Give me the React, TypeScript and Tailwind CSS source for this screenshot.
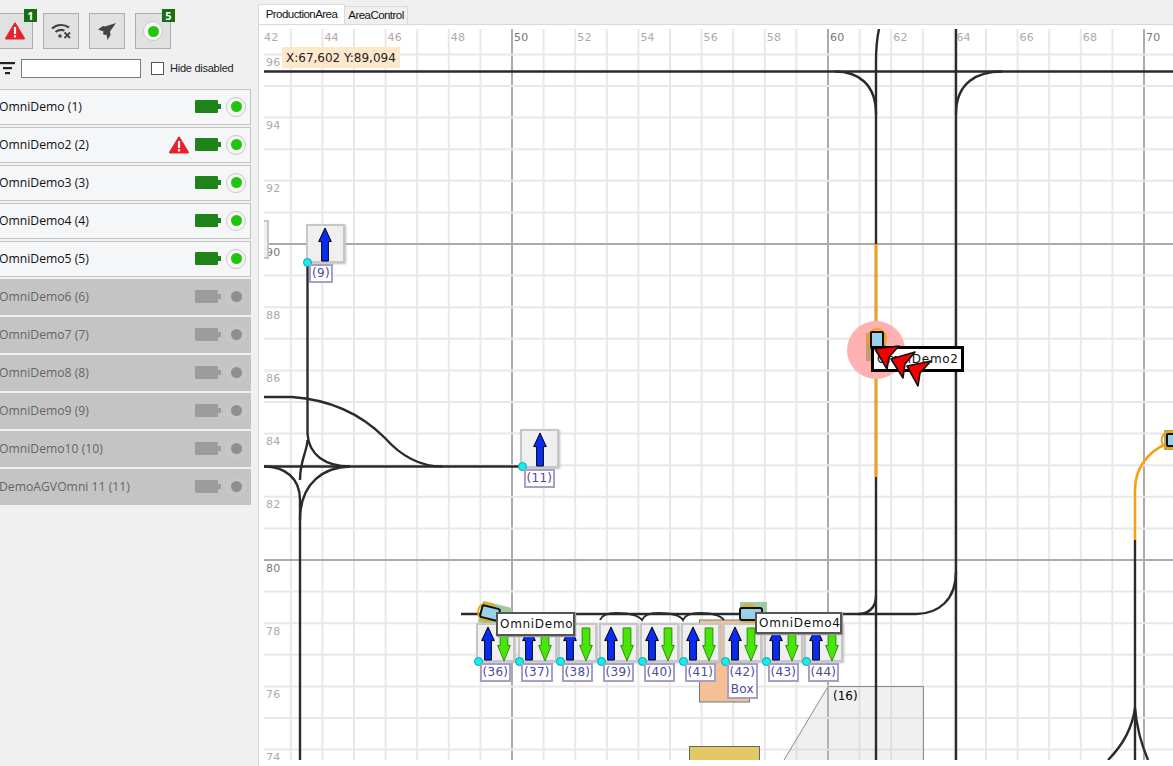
import { CSSProperties } from "react";

const GRID_FONT = "font-['DejaVu_Sans',sans-serif]";
const UI_FONT = "font-['Open_Sans',sans-serif]";

// map scale: 31.6px per unit, anchored on 50 / 90
const mapX = (u: number) => 512 + (u - 50) * 31.6;
const mapY = (v: number) => 244 + (90 - v) * 31.6;

// canvas origin on the page
const at = (x: number, y: number): CSSProperties => ({ left: x - 264, top: y - 29 });

const vehicles = [
  { name: "OmniDemo (1)", on: true },
  { name: "OmniDemo2 (2)", on: true, alarm: true },
  { name: "OmniDemo3 (3)", on: true },
  { name: "OmniDemo4 (4)", on: true },
  { name: "OmniDemo5 (5)", on: true },
  { name: "OmniDemo6 (6)", on: false },
  { name: "OmniDemo7 (7)", on: false },
  { name: "OmniDemo8 (8)", on: false },
  { name: "OmniDemo9 (9)", on: false },
  { name: "OmniDemo10 (10)", on: false },
  { name: "DemoAGVOmni 11 (11)", on: false },
];

const rowStations = [
  { id: 36, x: 478 },
  { id: 37, x: 519.5 },
  { id: 38, x: 560 },
  { id: 39, x: 601 },
  { id: 40, x: 642 },
  { id: 41, x: 683 },
  { id: 42, x: 725, extra: "Box" },
  { id: 43, x: 766 },
  { id: 44, x: 806 },
];

function WarningIcon({ className }: { className: string }) {
  return (
    <svg viewBox="0 0 20 18" className={className}>
      <path d="M10 1.5 L19 16.5 H1 Z" fill="#e8212b" stroke="#e8212b" strokeWidth="2" strokeLinejoin="round" />
      <rect x="8.9" y="5" width="2.2" height="7" fill="#fff" />
      <rect x="8.9" y="13.2" width="2.2" height="2.2" fill="#fff" />
    </svg>
  );
}

function StatusDot({ on }: { on: boolean }) {
  return (
    <span
      className={`flex h-[20px] w-[20px] items-center justify-center rounded-full border ${
        on ? "border-[#c8c8c8] bg-[#f6f6f6]" : "border-[#cacaca] bg-[#c6c6c6]"
      }`}
    >
      <span className={`h-[11px] w-[11px] rounded-full ${on ? "bg-[#1fc60d]" : "bg-[#8f8f8f]"}`} />
    </span>
  );
}

function Battery({ on }: { on: boolean }) {
  const color = on ? "bg-[#1e841a]" : "bg-[#9c9c9c]";
  return (
    <span className="flex items-center">
      <span className={`h-[13px] w-[23px] rounded-[1px] ${color}`} />
      <span className={`h-[5px] w-[3px] ${color}`} />
    </span>
  );
}

function ToolButton({ badge, children }: { badge?: number; children: React.ReactNode }) {
  return (
    <div className="relative flex h-[36px] w-[36px] items-center justify-center border border-[#adadad] bg-[#e1e1e1]">
      {children}
      {badge !== undefined && (
        <span className="absolute -right-[5px] -top-[5px] flex h-[13px] w-[13px] items-center justify-center bg-[#1a6e12] text-[11px] font-bold leading-none text-white">
          {badge}
        </span>
      )}
    </div>
  );
}

function Sidebar() {
  return (
    <aside className={`flex h-full w-[258px] shrink-0 flex-col overflow-hidden pt-[13px] ${UI_FONT}`}>
      <div className="-ml-[3px] flex gap-[10px]">
        <ToolButton badge={1}>
          <WarningIcon className="h-[18px] w-[20px]" />
        </ToolButton>
        <ToolButton>
          <svg viewBox="0 0 20 16" className="h-[16px] w-[20px]" fill="none" stroke="#444" strokeWidth="2.2">
            <path d="M1 5.5 C6 1, 13 1, 18 4.5" />
            <path d="M4.5 9 C7.5 6.5, 11 6.5, 13.5 7.5" />
            <circle cx="9" cy="13" r="1.8" fill="#444" stroke="none" />
            <path d="M13.5 9.5 L19 15 M19 9.5 L13.5 15" strokeWidth="1.8" />
          </svg>
        </ToolButton>
        <ToolButton>
          <svg viewBox="0 0 18 17" className="h-[17px] w-[18px]" fill="#444">
            <path d="M18 0 L7 3.5 L5 3 L0 6.5 L5.5 8.5 L5 11 L7 12 L8.5 11.5 L9.5 17 L12.5 12 L12 8.5 Z" />
          </svg>
        </ToolButton>
        <ToolButton badge={5}>
          <StatusDot on />
        </ToolButton>
      </div>

      <div className="mt-[10px] flex h-[19px] items-center">
        <svg viewBox="0 0 15 13" className="h-[13px] w-[15px]" fill="#222">
          <rect x="0" y="0" width="15" height="2.2" />
          <rect x="3" y="5" width="9" height="2.2" />
          <rect x="5" y="10" width="5" height="2.2" />
        </svg>
        <input className="ml-[6px] h-[19px] w-[120px] border border-[#7a7a7a] bg-white" />
        <span className="ml-[10px] h-[13px] w-[13px] border border-[#555] bg-white" />
        <span className="ml-[6px] font-['Liberation_Sans',sans-serif] text-[11px] tracking-[-0.25px] text-[#222]">
          Hide disabled
        </span>
      </div>

      <div className="-ml-[4px] mt-[11px] flex w-[255px] flex-col gap-[2px]">
        {vehicles.map((v) => (
          <div
            key={v.name}
            className={`flex h-[36px] items-center border pb-[1px] pl-[2px] pr-[4px] text-[12.2px] ${
              v.on ? "border-[#c4c4c4] bg-[#f5f6f8] text-[#111]" : "border-[#c4c4c4] bg-[#c4c4c4] text-[#666]"
            }`}
          >
            <span className="mt-[1px] flex-1">{v.name}</span>
            {v.alarm && <WarningIcon className="mr-[6px] h-[18px] w-[20px]" />}
            <Battery on={v.on} />
            <span className="ml-[5px]">
              <StatusDot on={v.on} />
            </span>
          </div>
        ))}
      </div>
    </aside>
  );
}

function UpArrow({ className }: { className: string }) {
  return (
    <svg viewBox="0 0 14 36" className={className}>
      <path d="M7 1 L13.5 15 H10.5 V35 H3.5 V15 H0.5 Z" fill="#0a2cf0" stroke="#000" strokeWidth="1" />
    </svg>
  );
}

function DownArrow({ className }: { className: string }) {
  return (
    <svg viewBox="0 0 14 36" className={className}>
      <path d="M3 1 H11 V19 H13.5 L7 35 L0.5 19 H3 Z" fill="#48e606" stroke="#2c8a10" strokeWidth="1" />
    </svg>
  );
}

function NodeLabel({ x, y, children }: { x: number; y: number; children: React.ReactNode }) {
  return (
    <div
      className="absolute flex flex-col items-center gap-[2px] border-2 border-[#a79fcb] bg-white px-[1px] text-[12px] leading-[15px] tracking-[0.3px] text-[#4a4a9a]"
      style={at(x, y)}
    >
      {children}
    </div>
  );
}

function Station({ x, y, id, both, extra }: { x: number; y: number; id: number; both?: boolean; extra?: string }) {
  return (
    <>
      <div
        className="absolute flex h-[39px] w-[39px] items-start justify-center gap-[2px] border-2 border-[#c6c6c6] bg-[#efefef] pt-[1px] shadow-[1px_1px_2px_#bbb]"
        style={at(x - 2, y - 38)}
      >
        <UpArrow className="h-[35px] w-[14px]" />
        {both && <DownArrow className="mt-[1px] h-[35px] w-[14px]" />}
      </div>
      <span className="absolute h-[9px] w-[9px] rounded-full border border-[#12a0a8] bg-[#0ff0f0]" style={at(x - 4.5, y - 4.5)} />
      <NodeLabel x={x + 1.5} y={y + 2}>
        <span>({id})</span>
        {extra && <span>{extra}</span>}
      </NodeLabel>
    </>
  );
}

function MapLines() {
  const cols = Array.from({ length: 30 }, (_, i) => 42 + i);
  const rows = Array.from({ length: 24 }, (_, i) => 73 + i);
  return (
    <svg viewBox="264 29 909 731" className="absolute inset-0 h-[731px] w-[909px]" fill="none">
      {cols.map((u) => (
        <line
          key={u}
          x1={mapX(u)}
          x2={mapX(u)}
          y1={29}
          y2={760}
          stroke={u % 10 === 0 ? "#ababab" : "#e8e8e8"}
          strokeWidth="2"
        />
      ))}
      {rows.map((v) => (
        <line
          key={v}
          x1={264}
          x2={1173}
          y1={mapY(v)}
          y2={mapY(v)}
          stroke={v % 10 === 0 ? "#ababab" : "#e8e8e8"}
          strokeWidth="2"
        />
      ))}

      {/* parked areas */}
      <path d="M784 760 L828 686.5 H923.5 V760" fill="#c8c8c8" fillOpacity="0.28" stroke="#8c8c8c" />
      <rect x="699.5" y="620" width="50" height="82" fill="#f6c097" stroke="#5f8080" />
      <rect x="689.5" y="746.5" width="70" height="20" fill="#e2c966" stroke="#666" />

      {/* tracks */}
      <g stroke="#2a2a2a" strokeWidth="2.4">
        <path d="M264 71.5 H1173" strokeWidth="2.4" />
        <path d="M876 760 V62 C876 48, 877 38, 879 29" />
        <path d="M835 71.5 C858 71.5, 876 84, 876 114" />
        <path d="M956 29 V760" />
        <path d="M1002 71.5 C978 71.5, 956 82, 956 114" />
        <path d="M461 614 H916 C938 614, 956 600, 956 572" />
        <path d="M858 614 C868 614, 876 608, 876 596" />
        <path d="M307.5 262 V434" />
        <path d="M307.5 434 C309 455, 325 466, 350 466.5" />
        <path d="M307.5 440 C307 452, 300 460, 300 480" />
        <path d="M264 466.5 H522" />
        <path d="M264 466.5 C285 466.5, 300 478, 300 500 V760" />
        <path d="M350 466.5 C325 467, 300 482, 300 520" />
        <path d="M264 397 H292 C335 400, 365 418, 385 438 C400 455, 420 466.5, 442 466.5" />
        <path d="M600 620 C602 615, 608 613, 616 613 C630 613, 638 615, 642 620 C644 615, 650 613, 658 613 C670 613, 680 615, 683 620 C685 615, 692 613, 700 613 C712 613, 720 615, 724 620" strokeWidth="2" />
        <path d="M1135 540 V760" />
        <path d="M1135 708 C1132 730, 1122 746, 1108 760" />
        <path d="M1135 708 C1137 730, 1142 746, 1148 760" />
      </g>
      <g stroke="#f8a012" strokeWidth="2.6">
        <path d="M876 244 V477" />
        <path d="M1135 540 V490 C1135 468, 1148 452, 1166 444" />
      </g>

      {/* vehicle 2 */}
      <circle cx="876" cy="350" r="29" fill="#ffb0b0" />
      <rect x="866" y="333" width="20" height="28" fill="#b09a58" fillOpacity="0.75" />
      <circle cx="877" cy="338" r="9" stroke="#f8a012" strokeWidth="2" />
      <rect x="871" y="332" width="12" height="16" rx="1" fill="#9cd0e8" stroke="#111" strokeWidth="2" />

      {/* vehicle 1 */}
      <rect x="480" y="604" width="30" height="22" fill="#9fc99f" transform="rotate(14 495 615)" />
      <circle cx="487" cy="612" r="9" stroke="#f8a012" strokeWidth="2" />
      <rect x="481" y="607" width="18" height="12" rx="2" fill="#9cd0e8" stroke="#111" strokeWidth="2" transform="rotate(14 490 613)" />

      {/* vehicle 4 */}
      <rect x="740" y="602" width="27" height="22" fill="#9fc99f" />
      <circle cx="749" cy="614" r="9" stroke="#f8a012" strokeWidth="2" />
      <rect x="740" y="608" width="22" height="12" rx="2" fill="#9cd0e8" stroke="#111" strokeWidth="2" />

      {/* vehicle at the right edge */}
      <rect x="1164" y="430" width="20" height="20" fill="#a8a858" />
      <circle cx="1170" cy="440" r="8.5" stroke="#f8a012" strokeWidth="2" />
      <rect x="1167" y="434" width="14" height="12" rx="1" fill="#9cd0e8" stroke="#111" strokeWidth="2" />
    </svg>
  );
}

function Cursors() {
  return (
    <svg viewBox="264 29 909 731" className="absolute inset-0 h-[731px] w-[909px]">
      <g fill="#f40000" stroke="#111" strokeWidth="1.6" strokeLinejoin="round">
        <path d="M875 349 L899 346 L889 357 L887 369 Z" />
        <path d="M891 359 L915 352 L905 364 L903 378 Z" />
        <path d="M907 366 L931 361 L920 373 L918 386 Z" />
      </g>
    </svg>
  );
}

function ProductionMap() {
  const cols = [44, 46, 48, 50, 52, 54, 56, 58, 60, 62, 64, 66, 68, 70];
  const rows = [96, 94, 92, 90, 88, 86, 84, 82, 80, 78, 76, 74];
  return (
    <div className={`absolute bottom-[6px] left-[5px] right-0 top-[4px] overflow-hidden ${GRID_FONT}`}>
      <MapLines />

      <span className="absolute text-[11px] leading-none tracking-[0.2px] text-[#aaa]" style={at(264, 32)}>
        42
      </span>
      {cols.map((u) => (
        <span
          key={u}
          className={`absolute text-[11px] leading-none tracking-[0.2px] ${u % 10 === 0 ? "text-[#777]" : "text-[#aaa]"}`}
          style={at(mapX(u) + 2, 32)}
        >
          {u}
        </span>
      ))}
      {rows.map((v) => (
        <span
          key={v}
          className={`absolute text-[11px] leading-none tracking-[0.2px] ${v % 10 === 0 ? "text-[#777]" : "text-[#aaa]"}`}
          style={at(266, mapY(v) + 2.5)}
        >
          {v}
        </span>
      ))}

      <div className="absolute h-[39px] w-[39px] border-2 border-[#c6c6c6] bg-[#efefef]" style={at(230, 220)} />

      <Station x={307.5} y={262} id={9} />
      <Station x={522} y={466.5} id={11} />
      {rowStations.map((s) => (
        <Station key={s.id} x={s.x} y={661} id={s.id} both extra={s.extra} />
      ))}

      <span className="absolute text-[12px] leading-none text-black" style={at(833, 690)}>
        (16)
      </span>

      <div
        className="absolute flex h-[21px] w-[118px] items-center bg-[#fde8cc] pl-[4px] text-[12px] text-[#222]"
        style={at(282, 47)}
      >
        X:67,602 Y:89,094
      </div>

      <div
        className="absolute flex h-[24px] w-[79px] items-center border-2 border-[#555] bg-white pl-[2px] text-[12px] tracking-[0.7px] text-[#111] shadow-[1px_1px_1px_#999]"
        style={at(496, 612)}
      >
        OmniDemo
      </div>
      <div
        className="absolute flex h-[22px] w-[87px] items-center border-2 border-[#555] bg-white pl-[2px] text-[12px] tracking-[0.7px] text-[#111] shadow-[1px_1px_1px_#999]"
        style={at(755, 612)}
      >
        OmniDemo4
      </div>
      <div
        className="absolute flex h-[26px] w-[93px] items-center border-[3px] border-black bg-white pl-[3px] text-[12px] tracking-[0.7px] text-[#111]"
        style={at(871, 346)}
      >
        OmniDemo2
      </div>
      <Cursors />
    </div>
  );
}

export default function App() {
  return (
    <div className="flex h-[766px] w-[1173px] overflow-hidden bg-[#f0f0f0]">
      <Sidebar />
      <main className="mt-[4px] flex min-w-0 flex-1 flex-col">
        <div className="flex h-[20px] items-end font-['Liberation_Sans',sans-serif] text-[11.5px] tracking-[-0.55px] text-[#111]">
          <div className="flex h-[20px] w-[87px] items-center justify-center border-l border-r border-t border-[#d9d9d9] bg-white">
            ProductionArea
          </div>
          <div className="flex h-[18px] w-[63px] items-center justify-center border-r border-t border-[#d9d9d9] bg-[#f0f0f0]">
            AreaControl
          </div>
        </div>
        <div className="relative flex-1 border-l border-t border-[#d9d9d9] bg-white">
          <ProductionMap />
        </div>
      </main>
    </div>
  );
}
